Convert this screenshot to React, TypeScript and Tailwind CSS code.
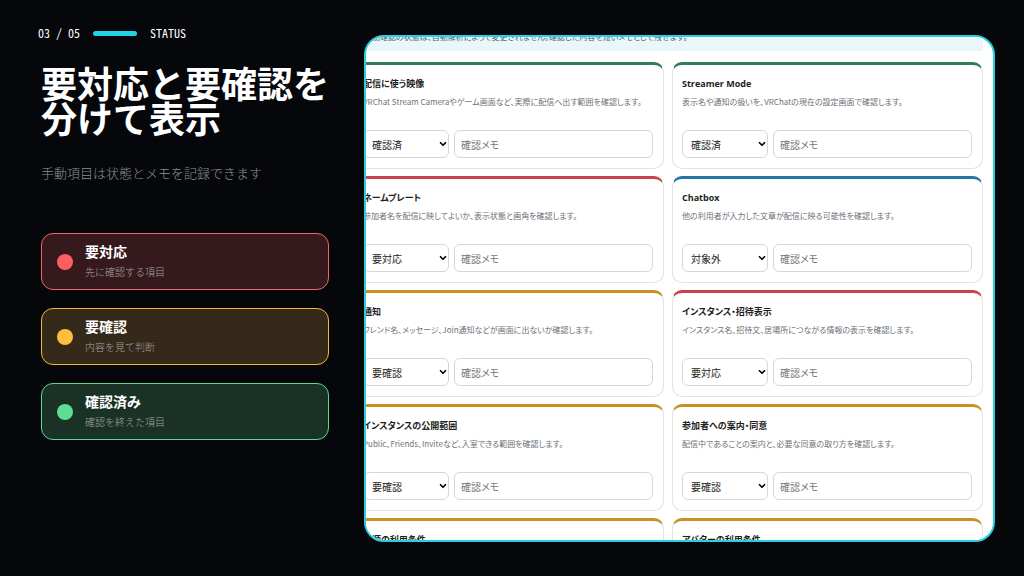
import React from 'react';
import { ChevronDown } from 'lucide-react';

type Status = '要対応' | '要確認' | '確認済' | '対象外';

interface CheckItem {
  title: string;
  description: string;
  status: Status;
}

const STATUSES: Status[] = ['要対応', '要確認', '確認済', '対象外'];

// Accent along the top edge of each card
const ACCENTS: Record<Status, string> = {
  要対応: 'border-t-[#c9444a]',
  要確認: 'border-t-[#c99022]',
  確認済: 'border-t-[#2f7d5b]',
  対象外: 'border-t-[#2577a3]',
};

const ITEMS: CheckItem[] = [
  {
    title: '配信に使う映像',
    description: 'VRChat Stream Cameraやゲーム画面など、実際に配信へ出す範囲を確認します。',
    status: '確認済',
  },
  {
    title: 'Streamer Mode',
    description: '表示名や通知の扱いを、VRChatの現在の設定画面で確認します。',
    status: '確認済',
  },
  {
    title: 'ネームプレート',
    description: '参加者名を配信に映してよいか、表示状態と画角を確認します。',
    status: '要対応',
  },
  {
    title: 'Chatbox',
    description: '他の利用者が入力した文章が配信に映る可能性を確認します。',
    status: '対象外',
  },
  {
    title: '通知',
    description: 'フレンド名、メッセージ、Join通知などが画面に出ないか確認します。',
    status: '要確認',
  },
  {
    title: 'インスタンス・招待表示',
    description: 'インスタンス名、招待文、居場所につながる情報の表示を確認します。',
    status: '要対応',
  },
  {
    title: 'インスタンスの公開範囲',
    description: 'Public、Friends、Inviteなど、入室できる範囲を確認します。',
    status: '要確認',
  },
  {
    title: '参加者への案内・同意',
    description: '配信中であることの案内と、必要な同意の取り方を確認します。',
    status: '要確認',
  },
  {
    title: '音源の利用条件',
    description: '配信で流れる音源の利用条件を確認します。',
    status: '要確認',
  },
  {
    title: 'アバターの利用条件',
    description: '使用するアバターの利用条件を確認します。',
    status: '要確認',
  },
];

const LEGEND = [
  {
    label: '要対応',
    note: '先に確認する項目',
    box: 'border-[#f26465] bg-[#35191d]',
    dot: 'bg-[#ff5d5f]',
  },
  {
    label: '要確認',
    note: '内容を見て判断',
    box: 'border-[#f0b63e] bg-[#35291a]',
    dot: 'bg-[#ffbe40]',
  },
  {
    label: '確認済み',
    note: '確認を終えた項目',
    box: 'border-[#5cd890] bg-[#1a3226]',
    dot: 'bg-[#5fdd94]',
  },
];

const CheckCard: React.FC<{ item: CheckItem }> = ({ item }) => (
  <article
    className={`h-[107px] min-w-0 rounded-[10px] border border-t-[3px] border-[#e2e2e5] bg-white pt-[10px] pr-[10px] pl-[9px] ${ACCENTS[item.status]}`}
  >
    <h2 className="font-['Open_Sans','Noto_Sans_CJK_JP',sans-serif] text-[9px] leading-[18px] font-bold whitespace-nowrap text-[#1c1e22]">
      {item.title}
    </h2>
    <p className="text-[8px] leading-[18px] whitespace-nowrap text-[#6c7178]">{item.description}</p>
    <div className="mt-[19px] flex gap-[5px]">
      <div className="relative w-[86px] shrink-0">
        <select
          aria-label={`${item.title}の状態`}
          defaultValue={item.status}
          className="block h-7 w-full appearance-none rounded-md border border-[#d6d6d9] bg-white px-2 text-[10px] text-[#1c1e22]"
        >
          {STATUSES.map((status) => (
            <option key={status}>{status}</option>
          ))}
        </select>
        <ChevronDown
          className="pointer-events-none absolute top-[9px] right-[1px] size-[10px] text-black"
          strokeWidth={4}
        />
      </div>
      <input
        type="text"
        aria-label={`${item.title}の確認メモ`}
        placeholder="確認メモ"
        className="block h-7 min-w-0 flex-1 rounded-md border border-[#d6d6d9] bg-white px-[6px] text-[10px] placeholder:text-[#777]"
      />
    </div>
  </article>
);

const App: React.FC = () => {
  return (
    <main
      lang="ja"
      className="flex h-screen gap-[35px] overflow-hidden bg-[#05070b] pt-[35px] pr-[29px] pb-[34px] pl-[38px] font-['Noto_Sans_CJK_JP',sans-serif] text-white"
    >
      <section className="-mt-3 w-[291px] shrink-0">
        <div className="flex h-5 items-center gap-[13px] font-['Noto_Sans_Mono_CJK_JP','Noto_Sans_CJK_JP',monospace] text-xs">
          <span className="whitespace-pre">03 / 05</span>
          <span className="h-[5px] w-11 rounded-full bg-[#22d3e5]" />
          <span>STATUS</span>
        </div>

        <div className="pl-[3px]">
          <h1 className="mt-[22px] text-4xl leading-[35px] font-bold whitespace-nowrap">
            要対応と要確認を
            <br />
            分けて表示
          </h1>
          <p className="mt-7 text-[13px] leading-5 font-light text-[#8d9096]">手動項目は状態とメモを記録できます</p>

          <ul className="mt-[50px] flex flex-col gap-[18px]">
            {LEGEND.map((entry) => (
              <li key={entry.label} className={`flex h-[57px] items-center gap-3 rounded-xl border px-[15px] ${entry.box}`}>
                <span className={`size-4 rounded-full ${entry.dot}`} />
                <div>
                  <p className="text-sm leading-5 font-bold">{entry.label}</p>
                  <p className="text-[10px] leading-[22px] font-light text-[#a2a0a4]">{entry.note}</p>
                </div>
              </li>
            ))}
          </ul>
        </div>
      </section>

      <section className="min-w-0 flex-1 overflow-hidden rounded-[20px] border-2 border-[#27cfdf] bg-white [font-feature-settings:'palt']">
        <div className="-mt-3 mr-[10px] -ml-[13px]">
          <p className="bg-[#e9f6fb] px-[11px] pt-1 pb-[6px] text-[8px] leading-4 whitespace-nowrap text-[#4d6470]">
            手動確認の状態は、自動解析によって変更されません。確認した内容を短いメモとして残せます。
          </p>
          <div className="mt-[11px] grid grid-cols-2 gap-x-2 gap-y-[7px]">
            {ITEMS.map((item) => (
              <CheckCard key={item.title} item={item} />
            ))}
          </div>
        </div>
      </section>
    </main>
  );
};

export default App;
